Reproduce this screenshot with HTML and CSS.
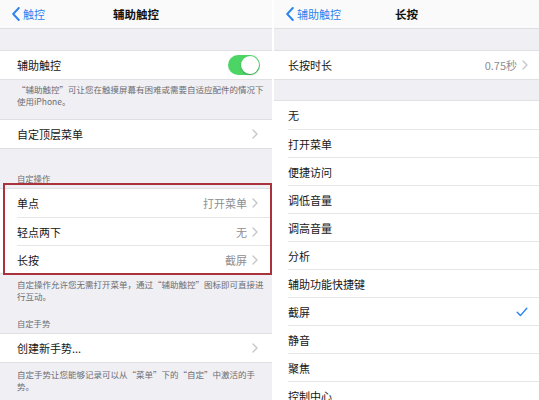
FILE: index.html
```html
<!DOCTYPE html>
<html lang="zh-CN">
<head>
<meta charset="utf-8">
<link rel="stylesheet" href="styles.css">
</head>
<body>
<div class="screen">
  <section class="panel panel-left">
    <header class="nav">
      <a class="back"><svg class="back-chev" width="8" height="14" viewBox="0 0 8 14"><path d="M6.8 1 L1.2 7 L6.8 13"/></svg>触控</a>
      <h1 class="nav-title">辅助触控</h1>
      <span></span>
    </header>
    <div class="band"></div>
    <div class="group">
      <div class="row row-switch"><span class="label">辅助触控</span><span class="switch"><span class="knob"></span></span></div>
    </div>
    <p class="footer footer-first">“辅助触控”可让您在触摸屏幕有困难或需要自适应配件的情况下使用iPhone。</p>
    <div class="group">
      <div class="row"><span class="label">自定顶层菜单</span><svg class="chev" width="6" height="10" viewBox="0 0 6 10"><path d="M1 1 L5 5 L1 9"/></svg></div>
    </div>
    <p class="header header-first">自定操作</p>
    <div class="group group-marked">
      <div class="row"><span class="label">单点</span><span class="value">打开菜单</span><svg class="chev" width="6" height="10" viewBox="0 0 6 10"><path d="M1 1 L5 5 L1 9"/></svg></div>
      <div class="row"><span class="label">轻点两下</span><span class="value">无</span><svg class="chev" width="6" height="10" viewBox="0 0 6 10"><path d="M1 1 L5 5 L1 9"/></svg></div>
      <div class="row"><span class="label">长按</span><span class="value">截屏</span><svg class="chev" width="6" height="10" viewBox="0 0 6 10"><path d="M1 1 L5 5 L1 9"/></svg></div>
    </div>
    <p class="footer footer-second">自定操作允许您无需打开菜单，通过“辅助触控”图标即可直接进行互动。</p>
    <p class="header header-second">自定手势</p>
    <div class="group">
      <div class="row"><span class="label">创建新手势...</span><svg class="chev" width="6" height="10" viewBox="0 0 6 10"><path d="M1 1 L5 5 L1 9"/></svg></div>
    </div>
    <p class="footer footer-third">自定手势让您能够记录可以从“菜单”下的“自定”中激活的手势。</p>
    <div class="group">
      <div class="row"><span class="label">闲置时不透明度</span><span class="value">40%</span><svg class="chev" width="6" height="10" viewBox="0 0 6 10"><path d="M1 1 L5 5 L1 9"/></svg></div>
    </div>
  </section>
  <section class="panel panel-right">
    <header class="nav">
      <a class="back"><svg class="back-chev" width="8" height="14" viewBox="0 0 8 14"><path d="M6.8 1 L1.2 7 L6.8 13"/></svg>辅助触控</a>
      <h1 class="nav-title">长按</h1>
      <span></span>
    </header>
    <div class="band"></div>
    <div class="group">
      <div class="row"><span class="label">长按时长</span><span class="value">0.75秒</span><svg class="chev" width="6" height="10" viewBox="0 0 6 10"><path d="M1 1 L5 5 L1 9"/></svg></div>
    </div>
    <div class="band band-list"></div>
    <div class="group">
      <div class="row"><span class="label">无</span></div>
      <div class="row"><span class="label">打开菜单</span></div>
      <div class="row"><span class="label">便捷访问</span></div>
      <div class="row"><span class="label">调低音量</span></div>
      <div class="row"><span class="label">调高音量</span></div>
      <div class="row"><span class="label">分析</span></div>
      <div class="row"><span class="label">辅助功能快捷键</span></div>
      <div class="row"><span class="label">截屏</span><svg class="check" width="12" height="10" viewBox="0 0 12 10"><path d="M1.2 5.2 L4.4 8.6 L10.8 1.2"/></svg></div>
      <div class="row"><span class="label">静音</span></div>
      <div class="row"><span class="label">聚焦</span></div>
      <div class="row"><span class="label">控制中心</span></div>
    </div>
  </section>
</div>
</body>
</html>
```

FILE: styles.css
```css
* {
  box-sizing: border-box;
  margin: 0;
  padding: 0;
}

body {
  width: 539px;
  height: 400px;
  overflow: hidden;
  background: #ffffff;
  font-family: "Noto Sans CJK SC", "Noto Sans", sans-serif;
  color: #161616;
}

.screen {
  display: flex;
  gap: 2px;
  height: 400px;
  overflow: hidden;
}

.panel {
  background: #efeff4;
  overflow: hidden;
}

.panel-left {
  width: 272px;
  flex: none;
}

.panel-right {
  flex: 1;
}

.nav {
  height: 29px;
  background: #fafafa;
  border-bottom: 1px solid #dedee2;
  display: grid;
  grid-template-columns: 1fr auto 1fr;
  align-items: center;
}

.back {
  display: flex;
  align-items: center;
  gap: 3px;
  padding-left: 12px;
  color: #2b83ee;
  font-size: 11px;
  line-height: 14px;
}

.back-chev path {
  fill: none;
  stroke: #2b83ee;
  stroke-width: 1.9;
  stroke-linecap: round;
  stroke-linejoin: round;
}

.nav-title {
  font-size: 11.5px;
  font-weight: 600;
  line-height: 14px;
  color: #111;
}

.band {
  height: 21px;
}

.band-list {
  height: 20px;
}

.group {
  background: #ffffff;
  border-top: 1px solid #e0e0e4;
  border-bottom: 1px solid #e0e0e4;
}

.row {
  height: 28px;
  margin-left: 17px;
  padding-right: 14px;
  display: flex;
  align-items: center;
  gap: 5px;
  font-size: 11px;
  line-height: 14px;
}

.panel-right .row {
  margin-left: 14px;
  padding-right: 11px;
}

.row + .row {
  border-top: 1px solid #e6e6ea;
}

.label {
  flex: 1;
  white-space: nowrap;
}

.value {
  color: #8e8e93;
  white-space: nowrap;
}

.chev path {
  fill: none;
  stroke: #c5c5ca;
  stroke-width: 1.3;
  stroke-linecap: round;
  stroke-linejoin: round;
}

.check path {
  fill: none;
  stroke: #2b83ee;
  stroke-width: 1.4;
  stroke-linecap: round;
  stroke-linejoin: round;
}

.row-switch {
  padding-right: 12px;
}

.switch {
  width: 32px;
  height: 20px;
  border-radius: 10px;
  background: #4cd464;
  display: flex;
  justify-content: flex-end;
  align-items: center;
  padding: 1px;
}

.knob {
  width: 18px;
  height: 18px;
  border-radius: 50%;
  background: #ffffff;
  box-shadow: 0 1px 2px rgba(0, 0, 0, 0.25);
}

.footer {
  font-size: 8.5px;
  line-height: 12px;
  color: #6d6d72;
  padding: 0 4px 0 17px;
}

.footer-first {
  padding-top: 3px;
  padding-bottom: 12px;
}

.footer-second {
  padding-top: 4px;
}

.footer-third {
  padding-top: 5px;
  padding-bottom: 12px;
}

.header {
  font-size: 8.3px;
  line-height: 12px;
  color: #6d6d72;
  padding: 0 17px 4px;
}

.header-first {
  padding-top: 23px;
}

.header-second {
  padding-top: 15px;
}

.group-marked {
  position: relative;
}

.group-marked::after {
  content: "";
  position: absolute;
  top: -6px;
  left: 3px;
  right: 0;
  bottom: -2px;
  border: 2px solid #a9323d;
}
```
